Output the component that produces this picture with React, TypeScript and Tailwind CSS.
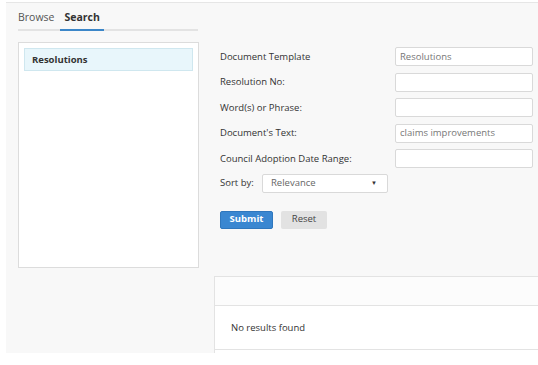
import React from "react";

const font = { fontFamily: '"Open Sans", "Noto Sans", sans-serif' };

function Field({ label, value }: { label: string; value?: string }) {
  return (
    <div className="flex items-center h-[25.5px]">
      <div className="w-[175px] text-[9.5px] text-[#333]">{label}</div>
      <div className="w-[138px] h-[19px] bg-white border border-[#d9d9d9] rounded-[2px] flex items-center px-[4px] text-[9.5px] text-[#777]">
        {value}
      </div>
    </div>
  );
}

export default function App() {
  return (
    <div className="w-[538px] h-[365px] bg-white overflow-hidden" style={font}>
      <div className="ml-[6px] h-[351px] bg-[#f8f8f8] border-t border-[#e6e6e6] mt-[2px] flex">
        {/* left column */}
        <div className="pl-[12px] w-[196px] shrink-0">
          <div className="w-[180px] h-[28px] border-b-2 border-[#e3e3e3] flex items-end text-[10.5px] pb-[3px]">
            <span className="text-[#555] mr-[10px]">Browse</span>
            <span className="relative font-bold text-[#333]">
              Search
              <span className="absolute left-[-4px] right-[-4px] bottom-[-5px] h-[2px] bg-[#3b86c8]" />
            </span>
          </div>
          <div className="mt-[11px] w-[181px] h-[226px] bg-white border border-[#dcdcdc] pt-[5px] px-[5px]">
            <div className="h-[23px] bg-[#e8f6fb] border border-[#cfe7ef] flex items-center pl-[7px] pt-[2px] text-[9.5px] font-bold text-[#333]">
              Resolutions
            </div>
          </div>
        </div>
        {/* right column */}
        <div className="flex-1 flex flex-col pl-[12px]">
          <div className="pl-[6px] pt-[41px]">
            <Field label="Document Template" value="Resolutions" />
            <Field label="Resolution No:" />
            <Field label="Word(s) or Phrase:" />
            <Field label="Document's Text:" value="claims improvements" />
            <Field label="Council Adoption Date Range:" />
            <div className="flex items-center h-[26px] mt-[-1px]">
              <span className="text-[9.5px] text-[#333] w-[42px]">Sort by:</span>
              <div className="w-[126px] h-[19px] bg-white border border-[#d9d9d9] rounded-[2px] flex items-center justify-between pl-[8px] pr-[10px] text-[9.5px] text-[#666]">
                <span>Relevance</span>
                <span className="text-[6px] text-[#333]">▼</span>
              </div>
            </div>
            <div className="flex gap-[8px] mt-[14px]">
              <div className="w-[53px] h-[18px] bg-[#3a87d1] border border-[#2f77bd] rounded-[2px] text-white text-[9.5px] font-bold flex items-center justify-center">
                Submit
              </div>
              <div className="w-[46px] h-[18px] bg-[#e2e2e2] rounded-[2px] text-[#444] text-[9.5px] flex items-center justify-center">
                Reset
              </div>
            </div>
          </div>
          <div className="mt-[47px] flex-1 border-l border-t border-[#e3e3e3] bg-white flex flex-col">
            <div className="h-[29px] bg-[#fcfcfc] border-b border-[#e3e3e3]" />
            <div className="h-[44px] border-b border-[#e3e3e3] flex items-center pl-[16px] pt-[3px] text-[9.5px] text-[#333]">
              No results found
            </div>
          </div>
        </div>
      </div>
    </div>
  );
}
